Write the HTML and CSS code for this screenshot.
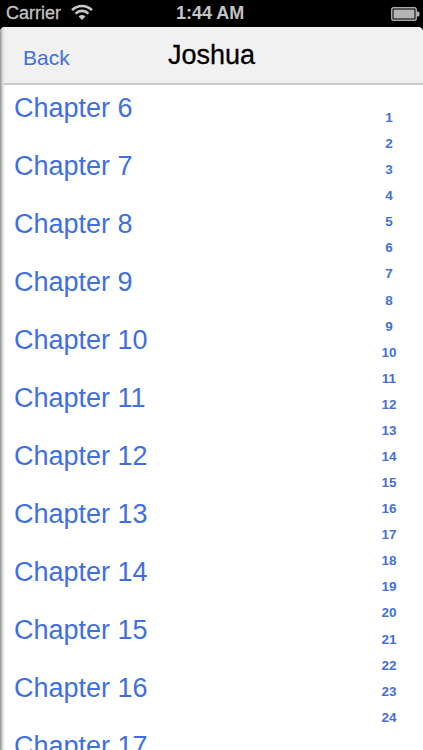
FILE: index.html
```html
<!DOCTYPE html>
<html lang="en">
<head>
<meta charset="utf-8">
<title>Joshua</title>
<link rel="stylesheet" href="styles.css">
</head>
<body>
<div class="status">
  <div class="status-left">
    <span>Carrier</span>
    <svg class="wifi" width="22" height="16" viewBox="0 0 22 16"><path d="M1 6.2C6.6 .6 15.4 .6 21 6.2" class="arc"/><path d="M4.6 9.6C8.2 6 13.8 6 17.4 9.6" class="arc"/><path d="M11 16 7.6 12.4C9.6 10.6 12.4 10.6 14.4 12.4Z" class="wedge"/></svg>
  </div>
  <span class="time">1:44 AM</span>
  <svg class="battery" width="29" height="14" viewBox="0 0 29 14"><rect x=".75" y=".75" width="24.5" height="12.5" rx="2" class="batt-shell"/><rect x="2.5" y="2.5" width="21" height="9" class="batt-fill"/><path d="M26 4.5h1a1.500 1.500 0 0 1 1.500 1.500v2a1.500 1.500 0 0 1-1.500 1.500h-1Z" class="batt-fill"/></svg>
</div>
<div class="screen">
  <header class="nav">
    <a class="back">Back</a>
    <h1 class="title">Joshua</h1>
  </header>
  <main class="content">
    <ul class="chapters">
      <li>Chapter 6</li>
      <li>Chapter 7</li>
      <li>Chapter 8</li>
      <li>Chapter 9</li>
      <li>Chapter 10</li>
      <li>Chapter 11</li>
      <li>Chapter 12</li>
      <li>Chapter 13</li>
      <li>Chapter 14</li>
      <li>Chapter 15</li>
      <li>Chapter 16</li>
      <li>Chapter 17</li>
    </ul>
    <ol class="index">
      <li>1</li><li>2</li><li>3</li><li>4</li><li>5</li><li>6</li><li>7</li><li>8</li>
      <li>9</li><li>10</li><li>11</li><li>12</li><li>13</li><li>14</li><li>15</li><li>16</li>
      <li>17</li><li>18</li><li>19</li><li>20</li><li>21</li><li>22</li><li>23</li><li>24</li>
    </ol>
  </main>
</div>
</body>
</html>
```
FILE: styles.css
```css
* { box-sizing: border-box; margin: 0; padding: 0; }
html, body { height: 100%; overflow: hidden; background: #000; }
body { width: 423px; height: 750px; display: flex; flex-direction: column; font-family: "Liberation Sans", Arial, sans-serif; }
.status { height: 27px; flex: none; display: flex; align-items: center; justify-content: space-between; padding: 0 3px 0 6px; position: relative; color: #c4c4c4; font-size: 18px; font-weight: 400; -webkit-text-stroke: .3px #c4c4c4; }
.status-left { display: flex; align-items: center; gap: 10px; }
.wifi { display: block; margin-top: -3px; }
.arc { fill: none; stroke: #c8c8c8; stroke-width: 2.600; }
.wedge { fill: #c8c8c8; }
.time { position: absolute; left: 176px; top: 3px; font-weight: 700; -webkit-text-stroke: 0; font-size: 18px; line-height: 21px; }
.batt-shell { fill: none; stroke: #aaa; stroke-width: 1.500; }
.batt-fill { fill: #b4b4b4; }
.screen { flex: 1; min-height: 0; background: #fff; border-radius: 5px 5px 0 0; overflow: hidden; position: relative; display: flex; flex-direction: column; }
.screen::after { content: ""; position: absolute; left: 0; top: 0; bottom: 0; width: 5px; background: linear-gradient(to right, #8f8f8f, #d8d8d8 50%, rgba(255,255,255,0)); }
.nav { height: 58px; flex: none; background: #f1f1f1; border-bottom: 2px solid #c8c8c8; display: flex; align-items: center; justify-content: center; position: relative; }
.back { position: absolute; left: 23px; top: 19px; color: #3f6fe0; font-size: 21px; line-height: 24px; }
.title { font-size: 27px; font-weight: 400; color: #000; line-height: 30px; -webkit-text-stroke: .3px #000; }
.content { flex: 1; min-height: 0; position: relative; overflow: hidden; }
.chapters { list-style: none; padding: 0 0 0 14px; margin-top: -6px; }
.chapters li { height: 58px; line-height: 58px; font-size: 27px; color: #3f6fe0; }
.index { list-style: none; position: absolute; right: 0; top: 20px; width: 68px; text-align: center; }
.index li { height: 26.090px; line-height: 26.090px; font-size: 13.500px; font-weight: 700; color: #4470dc; }
```
